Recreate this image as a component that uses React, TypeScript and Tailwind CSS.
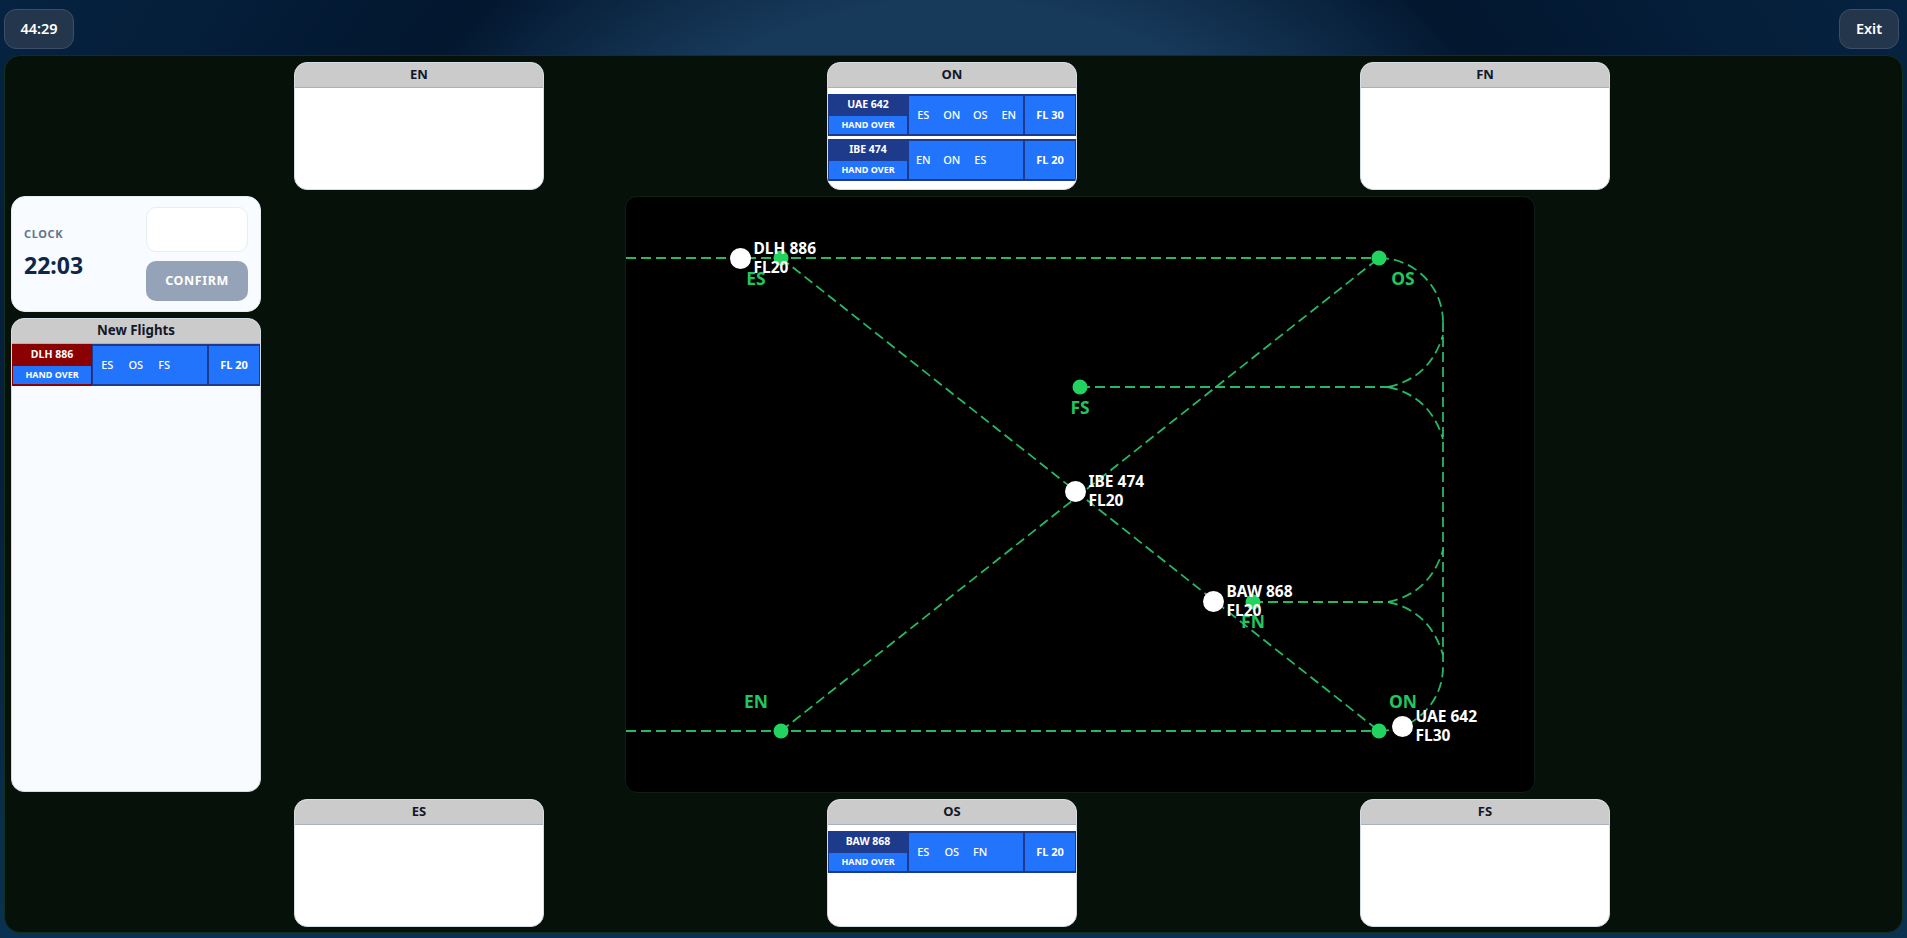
const font = "font-['Noto_Sans',sans-serif]";

type Flight = { id: string; route: string[]; level: string; isNew?: boolean };

const nodes = [
  { name: "ES", x: 155, y: 61, lx: 130, ly: 82 },
  { name: "OS", x: 753, y: 61, lx: 777, ly: 82 },
  { name: "FS", x: 454, y: 190, lx: 454, ly: 211 },
  { name: "EN", x: 155, y: 534, lx: 130, ly: 505 },
  { name: "ON", x: 753, y: 534, lx: 777, ly: 505 },
  { name: "FN", x: 627, y: 405, lx: 627, ly: 425 },
];

const aircraft = [
  { id: "DLH 886", level: "FL20", x: 114, y: 61 },
  { id: "IBE 474", level: "FL20", x: 449, y: 294 },
  { id: "BAW 868", level: "FL20", x: 587, y: 404 },
  { id: "UAE 642", level: "FL30", x: 776, y: 529 },
];

function Strip({ flight }: { flight: Flight }) {
  return (
    <div className="flex h-[42px] w-full shrink-0 bg-[#1e3a8a]">
      <div className={`flex w-[80px] shrink-0 flex-col justify-between pb-[2px] ${flight.isNew ? "bg-[#8b0000]" : "bg-[#1e3a8a]"}`}>
        <div className="flex h-[20px] items-center justify-center text-[10.5px] font-bold leading-none text-white">{flight.id}</div>
        <div className="mx-px flex h-[18px] items-center justify-center bg-[#2174fb] pb-px text-[9px] font-bold leading-none text-white">HAND OVER</div>
      </div>
      <div className="flex min-w-0 flex-1 gap-[2px] py-[2px] pr-px pl-px">
        <div className="grid flex-1 grid-cols-4 items-center bg-[#2174fb] pb-px text-[11px] font-medium leading-none text-white">
          {flight.route.map((r, i) => (
            <span key={i} className="text-center">{r}</span>
          ))}
        </div>
        <div className="flex w-[50px] items-center justify-center bg-[#2174fb] pb-[2px] text-[11px] font-bold leading-none text-white">{flight.level}</div>
      </div>
    </div>
  );
}

function Sector({ name, flights = [] }: { name: string; flights?: Flight[] }) {
  return (
    <div className="flex h-[128px] w-[250px] flex-col overflow-hidden rounded-[13px] border border-[#d5dbe3] bg-white">
      <div className="flex h-[25px] shrink-0 items-center justify-center border-b border-[#a9b1bd] bg-[#cbcbcb] text-[13px] font-bold text-[#111827]">{name}</div>
      <div className="flex flex-col gap-[3px] pt-[6px]">
        {flights.map((f) => (
          <Strip key={f.id} flight={f} />
        ))}
      </div>
    </div>
  );
}

function Radar() {
  const dash = { stroke: "#2bcc6b", strokeWidth: 1.8, strokeDasharray: "10 5", fill: "none", opacity: 0.9 };
  return (
    <div className="relative h-[597px] w-[910px] shrink-0 overflow-hidden rounded-[12px] border border-[#0e2015] bg-black">
      <svg className="absolute left-0 top-0" width="908" height="595" viewBox="0 0 908 595">
        <path d="M0 61H753" {...dash} />
        <path d="M0 534H753" {...dash} />
        <path d="M155 61L753 534" {...dash} />
        <path d="M155 534L753 61" {...dash} />
        <path d="M454 190H762" {...dash} />
        <path d="M627 405H762" {...dash} />
        <path d="M817 125V470" {...dash} />
        <path d="M753 61A64 64 0 0 1 817 125" {...dash} />
        <path d="M753 534A64 64 0 0 0 817 470" {...dash} />
        <path d="M762 190Q804 181 817 138" {...dash} />
        <path d="M762 190Q804 199 817 242" {...dash} />
        <path d="M762 405Q804 396 817 353" {...dash} />
        <path d="M762 405Q804 414 817 458" {...dash} />
        {nodes.map((n) => (
          <circle key={n.name} cx={n.x} cy={n.y} r="7.5" fill="#22d45f" />
        ))}
      </svg>
      {nodes.map((n) => (
        <div
          key={n.name}
          className="absolute -translate-x-1/2 -translate-y-1/2 text-[17.5px] font-bold leading-none text-[#22c55e]"
          style={{ left: n.lx, top: n.ly }}
        >
          {n.name}
        </div>
      ))}
      {aircraft.map((a) => (
        <div key={a.id} className="absolute flex items-center gap-[3px]" style={{ left: a.x - 10.5, top: a.y - 19 }}>
          <div className="h-[21px] w-[21px] rounded-full bg-white" />
          <div className="text-[15.5px] font-bold leading-[19px] text-white">
            <div>{a.id}</div>
            <div>{a.level}</div>
          </div>
        </div>
      ))}
    </div>
  );
}

export default function App() {
  return (
    <div className={`${font} flex h-[938px] w-[1907px] flex-col overflow-hidden bg-[linear-gradient(to_bottom,transparent_50%,#0b3150_99%),radial-gradient(circle_at_center,#17395a_469px,#03172f_660px,#062341_1060px)]`}>
      <div className="flex h-[55px] shrink-0 items-start justify-between pl-[4px] pr-[8px] pt-[9px]">
        <button className="flex h-[40px] w-[70px] items-center justify-center rounded-[12px] border border-[#3d4f68] bg-[#24364c] text-[14.5px] font-semibold text-white">44:29</button>
        <button className="flex h-[40px] w-[60px] items-center justify-center rounded-[12px] border border-[#3d4f68] bg-[#24364c] text-[14.5px] font-semibold text-white">Exit</button>
      </div>

      <div className="mx-[4px] flex h-[878px] flex-col gap-[6px] rounded-[16px] border border-[#12301f] bg-[#06110a] px-[6px] pt-[6px]">
        <div className="flex gap-[283px] pl-[283px]">
          <Sector name="EN" />
          <Sector
            name="ON"
            flights={[
              { id: "UAE 642", route: ["ES", "ON", "OS", "EN"], level: "FL 30" },
              { id: "IBE 474", route: ["EN", "ON", "ES"], level: "FL 20" },
            ]}
          />
          <Sector name="FN" />
        </div>

        <div className="flex h-[597px] items-start gap-[364px]">
          <div className="flex h-[596px] w-[250px] shrink-0 flex-col gap-[6px]">
            <div className="flex h-[116px] items-center justify-between rounded-[14px] border border-[#e3f0ec] bg-[#f8fbff] pl-[12px] pr-[12px]">
              <div className="flex flex-col gap-[13px] pb-[2px]">
                <div className="text-[11px] font-bold leading-none tracking-[0.6px] text-[#64748b]">CLOCK</div>
                <div className="text-[23px] font-bold leading-[26px] text-[#0f2747]">22:03</div>
              </div>
              <div className="flex w-[102px] flex-col gap-[9px]">
                <div className="h-[45px] rounded-[10px] border border-[#e3f0ec] bg-white" />
                <button className="h-[40px] rounded-[10px] bg-[#94a3b8] text-[12.5px] font-bold tracking-[0.6px] text-white">CONFIRM</button>
              </div>
            </div>
            <div className="flex flex-1 flex-col overflow-hidden rounded-[13px] border border-[#d5dbe3] bg-[#f8fbff]">
              <div className="flex h-[25px] shrink-0 items-center justify-center border-b border-[#a9b1bd] bg-[#cbcbcb] text-[13.3px] font-bold text-[#111827]">New Flights</div>
              <Strip flight={{ id: "DLH 886", route: ["ES", "OS", "FS"], level: "FL 20", isNew: true }} />
            </div>
          </div>
          <Radar />
        </div>

        <div className="flex gap-[283px] pl-[283px]">
          <Sector name="ES" />
          <Sector name="OS" flights={[{ id: "BAW 868", route: ["ES", "OS", "FN"], level: "FL 20" }]} />
          <Sector name="FS" />
        </div>
      </div>
    </div>
  );
}
